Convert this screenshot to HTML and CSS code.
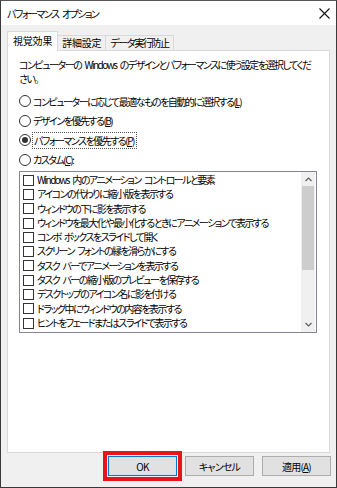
FILE: index.html
```html
<!DOCTYPE html>
<html lang="ja">
<head>
<meta charset="utf-8">
<link rel="stylesheet" href="styles.css">
</head>
<body>
<div class="window">
  <div class="titlebar">
    <span class="title">パフォーマンス オプション</span>
    <svg class="close" width="11" height="11" viewBox="0 0 11 11"><path d="M0.5 0.5 L10.5 10.5 M10.5 0.5 L0.5 10.5" stroke="#111" stroke-width="1.1" fill="none"/></svg>
  </div>
  <div class="content">
    <div class="tabs">
      <div class="tab active">視覚効果</div>
      <div class="tab">詳細設定</div>
      <div class="tab kana">データ実行防止</div>
    </div>
    <div class="panel">
      <p class="intro">コンピューターの Windows のデザインとパフォーマンスに使う設定を選択してくだ<br>さい。</p>
      <div class="radios">
        <div class="radio"><span class="dot"></span><span>コンピューターに応じて最適なものを自動的に選択する(<u>L</u>)</span></div>
        <div class="radio"><span class="dot"></span><span>デザインを優先する(<u>B</u>)</span></div>
        <div class="radio"><span class="dot checked"></span><span class="focus">パフォーマンスを優先する(<u>P</u>)</span></div>
        <div class="radio"><span class="dot"></span><span>カスタム(<u>C</u>):</span></div>
      </div>
      <div class="listbox">
        <ul class="items">
          <li><span class="box"></span>Windows 内のアニメーション コントロールと要素</li>
          <li><span class="box"></span>アイコンの代わりに縮小版を表示する</li>
          <li><span class="box"></span>ウィンドウの下に影を表示する</li>
          <li><span class="box"></span>ウィンドウを最大化や最小化するときにアニメーションで表示する</li>
          <li><span class="box"></span>コンボ ボックスをスライドして開く</li>
          <li><span class="box"></span>スクリーン フォントの縁を滑らかにする</li>
          <li><span class="box"></span>タスク バーでアニメーションを表示する</li>
          <li><span class="box"></span>タスク バーの縮小版のプレビューを保存する</li>
          <li><span class="box"></span>デスクトップのアイコン名に影を付ける</li>
          <li><span class="box"></span>ドラッグ中にウィンドウの内容を表示する</li>
          <li><span class="box"></span>ヒントをフェードまたはスライドで表示する</li>
        </ul>
        <div class="scrollbar">
          <svg class="arrow" width="7" height="5" viewBox="0 0 7 5"><path d="M0.5 4 L3.5 1 L6.5 4" stroke="#606060" stroke-width="1.2" fill="none"/></svg>
          <div class="track"><div class="thumb"></div></div>
          <svg class="arrow" width="7" height="5" viewBox="0 0 7 5"><path d="M0.5 1 L3.5 4 L6.5 1" stroke="#606060" stroke-width="1.2" fill="none"/></svg>
        </div>
      </div>
    </div>
    <div class="buttons">
      <button class="btn default">OK</button>
      <button class="btn">キャンセル</button>
      <button class="btn">適用(<u>A</u>)</button>
    </div>
  </div>
</div>
</body>
</html>
```
FILE: styles.css
```css
* { box-sizing: border-box; }
html, body { margin: 0; padding: 0; background: #fff; }
body {
  font-family: "Noto Sans CJK JP", "Noto Sans", sans-serif;
  font-size: 10px;
  font-feature-settings: "palt";
  letter-spacing: -1.5px;
  word-spacing: 2.5px;
  color: #000;
}
.window {
  width: 337px;
  height: 488px;
  border: 1px solid #3a3a3a;
  border-top-color: #555;
  background: #f0f0f0;
  display: flex;
  flex-direction: column;
}
.titlebar {
  height: 24px;
  background: #fff;
  display: flex;
  align-items: center;
  justify-content: space-between;
  padding: 0 6px 0 6px;
  flex: none;
}
.close { display: block; }
.content {
  flex: 1;
  padding: 6px 6px 0 6px;
  display: flex;
  flex-direction: column;
}
.tabs {
  display: flex;
  align-items: flex-end;
  height: 19px;
  position: relative;
  z-index: 1;
  letter-spacing: -0.2px;
}
.tab {
  height: 15px;
  line-height: 14px;
  padding: 0 4px;
  border: 1px solid #d9d9d9;
  border-bottom: none;
  border-left: none;
  background: #f0f0f0;
}
.tab.kana { letter-spacing: -1.4px; }
.tab.active {
  height: 20px;
  line-height: 17px;
  margin-bottom: -1px;
  background: #fff;
  border-left: 1px solid #d9d9d9;
  padding: 0 5px 0 5px;
}
.panel {
  background: #fff;
  border: 1px solid #d9d9d9;
  height: 403px;
  padding: 7px 11px 0 11px;
}
.intro {
  margin: 0;
  line-height: 14px;
  white-space: nowrap;
}
.radios {
  margin-top: 8px;
  display: flex;
  flex-direction: column;
  gap: 5px;
}
.radio {
  display: flex;
  align-items: center;
  height: 14.5px;
  gap: 1px;
}
.dot {
  width: 12px;
  height: 12px;
  border: 1px solid #333;
  border-radius: 50%;
  flex: none;
  position: relative;
  margin-right: 1px;
}
.dot.checked::after {
  content: "";
  position: absolute;
  left: 2px; top: 2px;
  width: 6px; height: 6px;
  border-radius: 50%;
  background: #333;
}
.focus {
  outline: 1px dotted #555;
  outline-offset: 0;
  padding: 0 2px 0 1px;
}
.listbox {
  margin-top: 4px;
  width: 298px;
  height: 162px;
  border: 1px solid #828790;
  display: flex;
}
.items {
  flex: 1;
  list-style: none;
  margin: 0;
  padding: 1px 0 0 3px;
}
.items li {
  height: 14.3px;
  line-height: 14.3px;
  display: flex;
  align-items: center;
  white-space: pre;
}
.box {
  width: 11px;
  height: 11px;
  border: 1px solid #333;
  margin-right: 3px;
  flex: none;
}
.scrollbar {
  width: 14px;
  background: #f0f0f0;
  display: flex;
  flex-direction: column;
  align-items: center;
  margin: 0 1px 0 0;
}
.arrow { flex: none; margin: 5px 0 4px; }
.arrow:last-child { margin: 4px 0 5px; }
.track { flex: 1; width: 100%; padding: 0 1px; }
.thumb { background: #cdcdcd; height: 84px; }
.buttons {
  display: flex;
  justify-content: flex-end;
  align-items: center;
  gap: 8px;
  padding: 3px 0 0 0;
  margin-right: -1px;
}
.btn {
  font-family: inherit;
  font-size: 10px;
  font-feature-settings: "palt";
  letter-spacing: -0.8px;
  width: 69px;
  height: 20px;
  background: #e1e1e1;
  border: 1px solid #adadad;
  color: #000;
  padding: 0;
  margin: 0;
}
.btn.default {
  border: 1px solid #0078d7;
  box-shadow: inset 0 0 0 1px #cde3f6;
  outline: 4px solid #e8141c;
  outline-offset: 1px;
}
u { text-decoration: underline; text-underline-offset: 1px; }
```
